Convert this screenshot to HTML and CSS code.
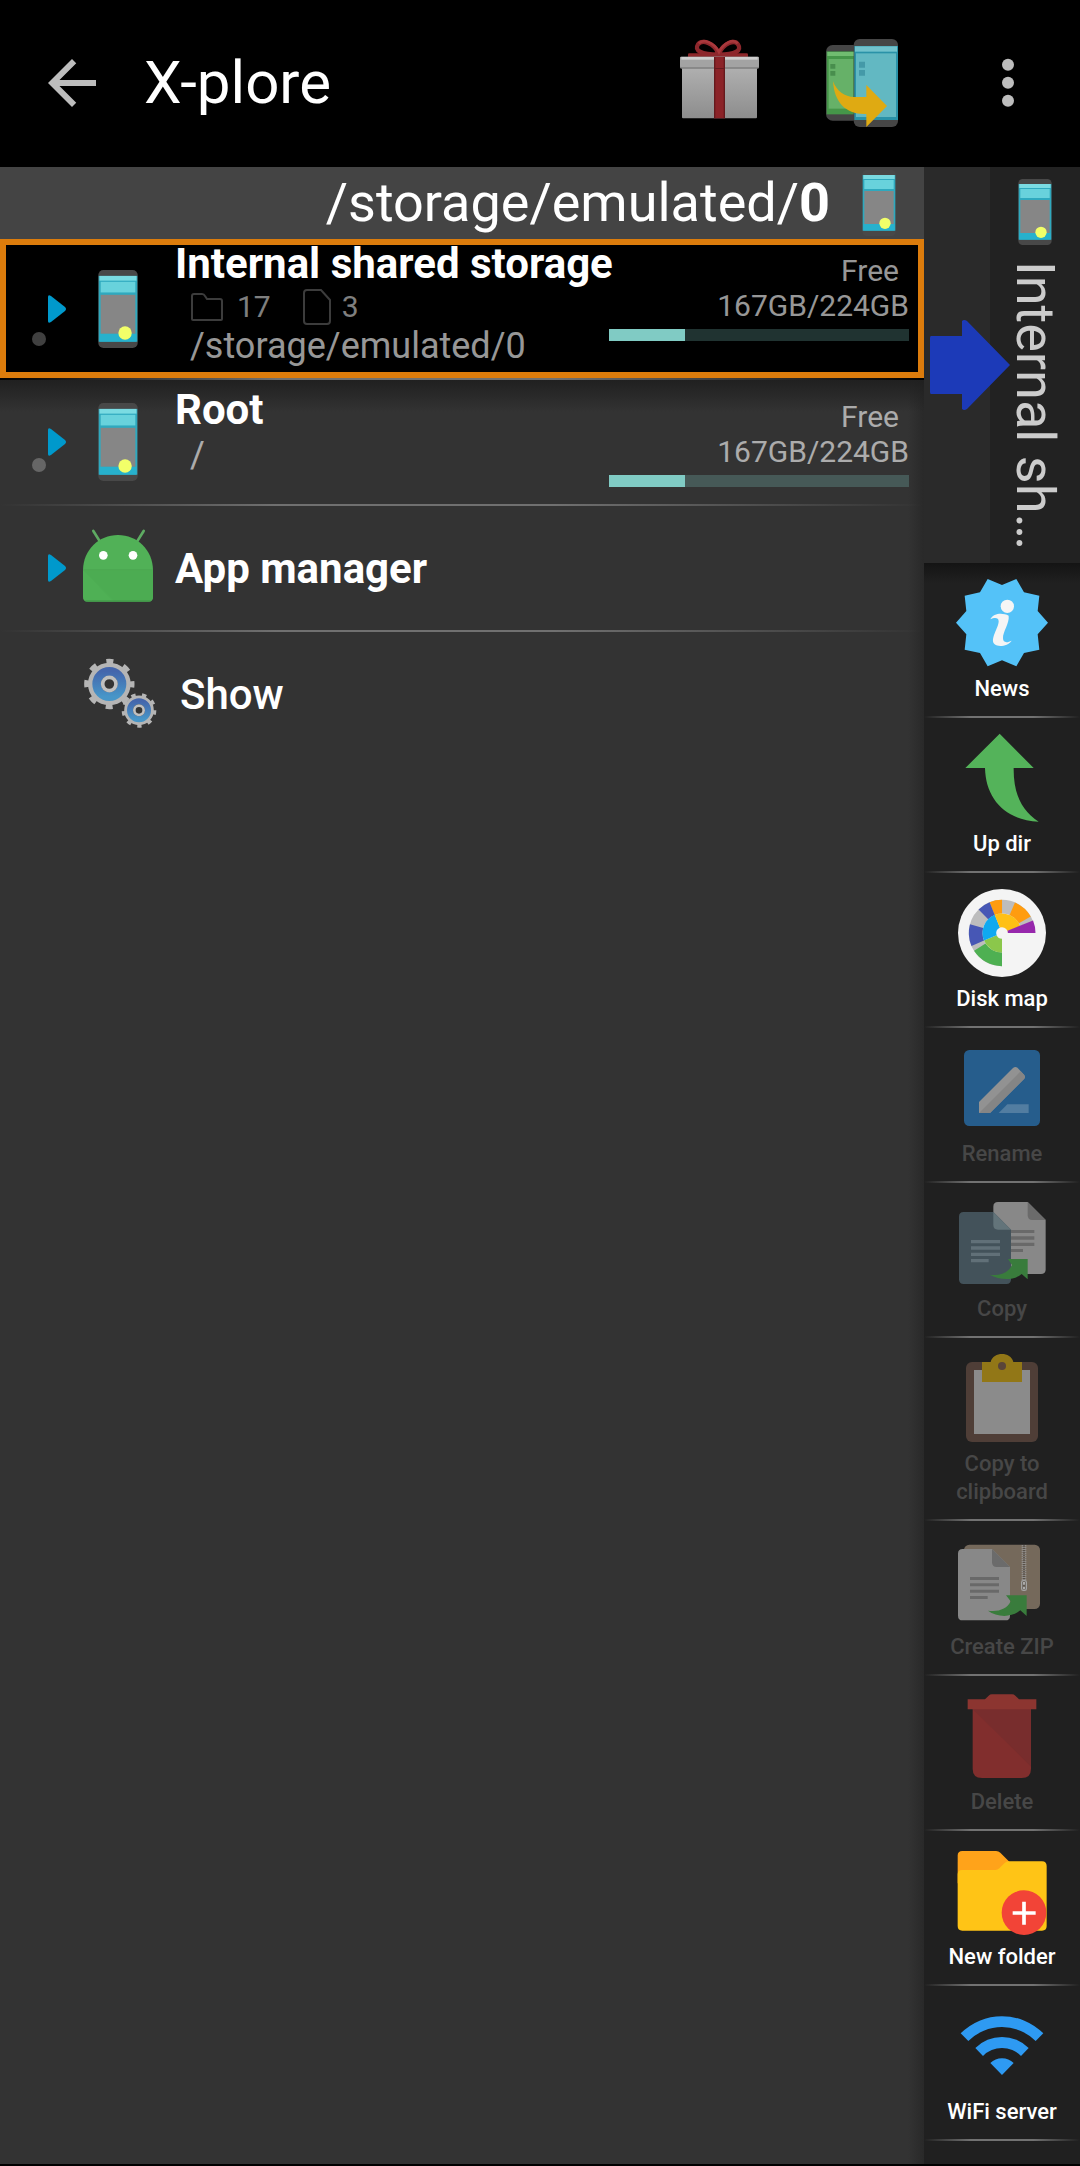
FILE: index.html
```html
<!DOCTYPE html>
<html lang="en">
<head>
<meta charset="utf-8">
<meta name="viewport" content="width=device-width, initial-scale=1">
<title>X-plore</title>
<link rel="stylesheet" href="styles.css">
</head>
<body>
<svg class="defs" aria-hidden="true">
  <defs>
    <linearGradient id="gift-body" x1="0" y1="0" x2="0" y2="1"><stop offset="0" stop-color="#b0b0b0"/><stop offset="1" stop-color="#8d8d8d"/></linearGradient>
    <linearGradient id="gear-blue" x1="0" y1="0" x2="0" y2="1"><stop offset="0" stop-color="#4466ac"/><stop offset="1" stop-color="#4796c8"/></linearGradient>
    <symbol id="phone" viewBox="0 0 100 198">
      <rect width="100" height="198" rx="13" fill="#484848"/>
      <rect x="1" y="15" width="98" height="167" fill="#2fa9be"/>
      <rect x="3" y="15" width="94" height="12" fill="#7adbe2"/>
      <rect x="6" y="30" width="88" height="27" fill="#68d2dc"/>
      <rect x="6" y="63" width="88" height="99" fill="#868686"/>
      <rect x="3" y="162" width="94" height="20" fill="#27b1cd"/>
      <circle cx="68" cy="160" r="17" fill="#f2ff69"/>
    </symbol>
    <symbol id="triangle" viewBox="0 0 18 28">
      <path d="M0 2Q0-1 3 1L17 12Q19 14 17 16L3 27Q0 29 0 26Z" fill="#0099cc"/>
    </symbol>
  </defs>
</svg>

<header class="appbar">
  <button class="icon-button" type="button" aria-label="Back">
    <svg class="icon-72" viewBox="0 0 24 24"><path fill="#bdbdbd" d="M20 11H7.83l5.59-5.59L12 4l-8 8 8 8 1.41-1.41L7.83 13H20z"/></svg>
  </button>
  <h1 class="appbar-title">X-plore</h1>
  <div class="appbar-actions">
    <button class="icon-button" type="button" aria-label="Donate">
      <svg class="icon-96" viewBox="96 105 288 288">
        <rect x="144" y="160" width="180" height="14" rx="4" fill="#8d272a"/>
        <path d="M236 162C222 128 186 118 174 133C162 151 182 164 236 164C288 164 306 151 294 133C284 118 252 128 236 162Z" fill="none" stroke="#8d272c" stroke-width="13"/>
        <path d="M176 130C190 116 222 126 237 156C252 126 280 116 293 130" fill="none" stroke="#a9383c" stroke-width="8"/>
        <rect x="126" y="200" width="225" height="155" rx="3" fill="url(#gift-body)"/>
        <rect x="120" y="170" width="237" height="36" rx="4" fill="#7f7f7f"/>
        <rect x="120" y="170" width="237" height="32" rx="4" fill="#a3a3a3"/>
        <rect x="124" y="171" width="229" height="8" fill="#cecece"/>
        <rect x="222" y="171" width="33" height="184" fill="#8b2328"/>
        <path d="M222 171h4v184h-4zM251 171h4v184h-4zM222 204h33v3h-33z" fill="#65191d"/>
      </svg>
    </button>
    <button class="icon-button" type="button" aria-label="Transfer between devices">
      <svg class="icon-96" viewBox="528 105 288 288">
        <rect x="558" y="135" width="100" height="227" rx="20" fill="#454545"/>
        <rect x="560" y="154" width="90" height="189" fill="#459649"/>
        <rect x="562" y="156" width="80" height="12" fill="#70bd70"/>
        <rect x="566" y="177" width="74" height="149" fill="#66b168"/>
        <path d="M571 192h15v14h-15zM571 213h15v14h-15z" fill="#488e4d"/>
        <rect x="641" y="117" width="133" height="264" rx="18" fill="#464646"/>
        <rect x="643" y="138" width="131" height="222" fill="#2a92a8"/>
        <rect x="645" y="139" width="126" height="16" fill="#72c2cc"/>
        <rect x="648" y="160" width="120" height="191" fill="#62b8c2"/>
        <path d="M657 185h18v18h-18zM657 210h18v17h-18z" fill="#4499a8"/>
        <path d="M579 244C590 273 614 291 642 291H679V255L741 318L679 381V342C620 345 583 309 579 244Z" fill="#dfaa12"/>
      </svg>
    </button>
    <button class="icon-button menu-button" type="button" aria-label="More options">
      <svg class="icon-72" viewBox="996 142 216 216"><g fill="#bdbdbd"><circle cx="1104" cy="195" r="18"/><circle cx="1104" cy="249" r="18"/><circle cx="1104" cy="303" r="18"/></g></svg>
    </button>
  </div>
</header>

<div class="workspace">
  <main class="pane">
    <div class="pathbar">
      <span class="pathbar-text">/storage/emulated/<b>0</b></span>
      <svg class="phone-small" aria-hidden="true"><use href="#phone"/></svg>
    </div>
    <ul class="entries">
      <li class="entry entry-selected">
        <button class="row" type="button">
          <span class="marker"></span>
          <svg class="expander" aria-hidden="true"><use href="#triangle"/></svg>
          <span class="entry-icon"><svg class="phone-large" aria-hidden="true"><use href="#phone"/></svg></span>
          <span class="entry-text">
            <span class="entry-title">Internal shared storage</span>
            <span class="counts">
              <svg class="count-folder" viewBox="0 0 34 30" aria-hidden="true"><path d="M2 27V4q0-2 2-2h8q2 0 3 2l2 3h13q2 0 2 2v18q0 1-1 1H3q-1 0-1-1z" fill="none" stroke="#3c3c3c" stroke-width="2"/></svg>
              <span>17</span>
              <svg class="count-file" viewBox="0 0 28 36" aria-hidden="true"><path d="M1 32V4q0-3 3-3h14l9 10v21q0 3-3 3H4q-3 0-3-3z" fill="none" stroke="#3c3c3c" stroke-width="2"/></svg>
              <span>3</span>
            </span>
            <span class="entry-path">/storage/emulated/0</span>
          </span>
          <span class="usage">
            <span class="usage-label">Free</span>
            <span>167GB/224GB</span>
            <progress class="usage-bar" value="57" max="224" aria-label="Used space"></progress>
          </span>
        </button>
      </li>
      <li class="entry">
        <button class="row row-detailed" type="button">
          <span class="marker"></span>
          <svg class="expander" aria-hidden="true"><use href="#triangle"/></svg>
          <span class="entry-icon"><svg class="phone-large" aria-hidden="true"><use href="#phone"/></svg></span>
          <span class="entry-text">
            <span class="entry-title">Root</span>
            <span class="entry-path">/</span>
          </span>
          <span class="usage">
            <span class="usage-label">Free</span>
            <span>167GB/224GB</span>
            <progress class="usage-bar" value="57" max="224" aria-label="Used space"></progress>
          </span>
        </button>
      </li>
      <li class="entry">
        <button class="row row-simple" type="button">
          <svg class="expander" aria-hidden="true"><use href="#triangle"/></svg>
          <span class="entry-icon">
            <svg class="icon-84" viewBox="228 108 252 252" aria-hidden="true">
              <path d="M280 123L300 155M431 123L411 155" stroke="#5eab62" stroke-width="8" stroke-linecap="round"/>
              <path d="M249 240C250 180 296 135 354 135S458 180 459 240V320Q459 335 444 335H264Q249 335 249 320Z" fill="#51b157"/>
              <path d="M249 240H459" stroke="#439a49" stroke-width="2"/>
              <path d="M250 241L342 334H264Q250 334 250 320Z" fill="#4fb055"/>
              <path d="M250 241H459V320Q459 334 444 334H342Z" fill="#4cac52"/>
              <path d="M256 333H452" stroke="#3f9146" stroke-width="3"/>
              <circle cx="310" cy="196" r="13" fill="#fff"/><circle cx="399" cy="196" r="13" fill="#fff"/>
            </svg>
          </span>
          <span class="entry-title">App manager</span>
        </button>
      </li>
      <li class="entry entry-last">
        <button class="row row-simple row-leaf" type="button">
          <span class="entry-icon">
            <svg class="icon-84" viewBox="228 486 252 252" aria-hidden="true">
              <g fill="none" stroke="#b5b5b5">
                <circle cx="328" cy="582" r="56" stroke-width="16"/>
                <circle cx="328" cy="582" r="68" stroke-width="15" pathLength="80" stroke-dasharray="4 6" stroke-dashoffset="2"/>
                <circle cx="417" cy="661" r="39" stroke-width="11"/>
                <circle cx="417" cy="661" r="46" stroke-width="12" pathLength="90" stroke-dasharray="4 6" stroke-dashoffset="0"/>
              </g>
              <circle cx="328" cy="582" r="38" fill="none" stroke="url(#gear-blue)" stroke-width="26"/>
              <circle cx="328" cy="582" r="20" fill="#333" stroke="#c0c0c0" stroke-width="11"/>
              <circle cx="417" cy="661" r="27" fill="none" stroke="url(#gear-blue)" stroke-width="18"/>
              <circle cx="417" cy="661" r="14" fill="#333" stroke="#c0c0c0" stroke-width="8"/>
            </svg>
          </span>
          <span class="entry-title entry-title-medium">Show</span>
        </button>
      </li>
    </ul>
  </main>

  <aside class="side">
    <div class="tabs">
      <button class="tab" type="button">
        <svg class="phone-small" aria-hidden="true"><use href="#phone"/></svg>
        <span class="tab-text">Internal sh…</span>
      </button>
      <svg class="pane-arrow" viewBox="0 0 80 90" aria-hidden="true"><path d="M1 16H32V1Q34-1 37 1L80 45L37 89Q34 91 32 89V74H1Q0 74 0 72V18Q0 16 1 16Z" fill="#1c3ab8"/></svg>
    </div>
    <nav class="tools">
      <button class="tool" type="button">
        <svg class="icon-96" viewBox="102 45 288 288" aria-hidden="true">
          <path d="M384 188L353 153 358 107 312 97 289 57 246 75 203 57 180 97 134 107 139 153 108 188 139 223 134 269 180 279 203 319 246 301 289 319 312 279 358 269 353 223Z" fill="#54c2f8"/>
          <circle cx="262" cy="139" r="20" fill="#f5f5f5"/>
          <path d="M211 178C221 158 249 158 266 167C269 190 248 215 249 235C249 250 263 248 275 242C264 258 236 262 224 253C208 239 236 204 236 184C236 171 222 173 211 178Z" fill="#f5f5f5"/>
        </svg>
        News
      </button>
      <button class="tool" type="button">
        <svg class="icon-96" viewBox="102 510 288 288" aria-hidden="true"><path d="M239 521L341 624H281C280 701 305 752 356 785C256 781 197 716 195 624H136Z" fill="#54b35a"/></svg>
        Up dir
      </button>
      <button class="tool" type="button">
        <svg class="icon-96" viewBox="102 975 288 288" aria-hidden="true">
          <circle cx="246" cy="1119" r="132" fill="#f4f4f4"/>
          <g fill="none" stroke-width="41">
            <circle cx="246" cy="1119" r="79" stroke="#bdbdbd" pathLength="360" stroke-dasharray="248 360" transform="rotate(90 246 1119)"/>
            <circle cx="246" cy="1119" r="79" stroke="#ff9c0f" pathLength="360" stroke-dasharray="37 360" transform="rotate(-67 246 1119)"/>
            <circle cx="246" cy="1119" r="79" stroke="#ff9c0f" pathLength="360" stroke-dasharray="22 360" transform="rotate(-112 246 1119)"/>
            <circle cx="246" cy="1119" r="79" stroke="#4757b5" pathLength="360" stroke-dasharray="23 360" transform="rotate(-135 246 1119)"/>
            <circle cx="246" cy="1119" r="79" stroke="#4757b5" pathLength="360" stroke-dasharray="38 360" transform="rotate(-203 246 1119)"/>
            <circle cx="246" cy="1119" r="79" stroke="#4eb052" pathLength="360" stroke-dasharray="57 360" transform="rotate(-270 246 1119)"/>
            <circle cx="246" cy="1119" r="38" stroke="#8bc74b" pathLength="360" stroke-dasharray="67 360" transform="rotate(-270 246 1119)"/>
            <circle cx="246" cy="1119" r="38" stroke="#10a9f0" pathLength="360" stroke-dasharray="91 360" transform="rotate(-203 246 1119)"/>
            <circle cx="246" cy="1119" r="38" stroke="#ffc014" pathLength="360" stroke-dasharray="92 360" transform="rotate(-112 246 1119)"/>
          </g>
          <circle cx="246" cy="1119" r="59" fill="none" stroke="#9728ac" stroke-width="83" pathLength="360" stroke-dasharray="22 360" transform="rotate(-22 246 1119)"/>
        </svg>
        Disk map
      </button>
      <button class="tool" type="button" disabled>
        <svg class="icon-96" viewBox="102 60 288 288" aria-hidden="true">
          <rect x="132" y="90" width="228" height="228" rx="16" fill="#265d8c"/>
          <path d="M177 246L279 144Q286 138 293 144L312 164Q318 171 312 177L210 279H177Z" fill="#929292"/>
          <path d="M177 279L302 154 312 164Q318 171 312 177L210 279Z" fill="#858585"/>
          <path d="M236 279L262 253H326V279Z" fill="#527da1"/>
        </svg>
        Rename
      </button>
      <button class="tool" type="button" disabled>
        <svg class="icon-96" viewBox="102 525 288 288" aria-hidden="true">
          <path d="M220 560Q220 546 234 546H323L377 600V748Q377 762 363 762H260L220 680Z" fill="#888"/>
          <path d="M323 546L377 600H337Q323 600 323 586Z" fill="#6b6b6b"/>
          <path d="M271 630h72v9h-72zM271 649h72v10h-72zM271 668h72v10h-72zM271 687h38v9h-38z" fill="#696969"/>
          <path d="M117 590Q117 576 131 576H220L273 629V778Q273 792 259 792H131Q117 792 117 778Z" fill="#43525a"/>
          <path d="M220 576L273 629H234Q220 629 220 615Z" fill="#63747a"/>
          <path d="M153 660h87v10h-87zM153 679h87v10h-87zM153 698h87v10h-87zM153 717h53v10h-53z" fill="#617078"/>
          <path d="M209 764C239 769 266 758 276 735L264 717H323V778L305 762C279 784 238 780 209 764Z" fill="#397c3c"/>
        </svg>
        Copy
      </button>
      <button class="tool" type="button" disabled>
        <svg class="icon-96" viewBox="102 990 288 288" aria-hidden="true">
          <rect x="138" y="1026" width="216" height="240" rx="18" fill="#4f3e37"/>
          <rect x="162" y="1050" width="168" height="192" fill="#8b8b8b"/>
          <path d="M186 1026H212C220 994 272 994 280 1026H306V1086H186Z" fill="#927717"/>
          <circle cx="246" cy="1038" r="12" fill="#594539"/>
        </svg>
        Copy to clipboard
      </button>
      <button class="tool" type="button" disabled>
        <svg class="icon-96" viewBox="102 69 288 288" aria-hidden="true">
          <rect x="132" y="104" width="228" height="193" rx="16" fill="#75695b"/>
          <path d="M312 106V212" stroke="#9a9a9a" stroke-width="14" stroke-dasharray="3 3"/>
          <path d="M312 106V212" stroke="#453f39" stroke-width="4" stroke-dasharray="4 3"/>
          <rect x="305" y="212" width="14" height="29" rx="5" fill="#5e574e" stroke="#a2a2a2" stroke-width="4"/>
          <path d="M312 216v8M312 230v8" stroke="#bbb" stroke-width="5"/>
          <path d="M114 131Q114 117 128 117H216L270 171V317Q270 331 256 331H128Q114 331 114 317Z" fill="#888"/>
          <path d="M216 117L270 171H230Q216 171 216 157Z" fill="#6b6b6b"/>
          <path d="M150 201h87v9h-87zM150 220h87v9h-87zM150 239h87v9h-87zM150 258h53v9h-53z" fill="#696969"/>
          <path d="M204 302C234 307 262 297 272 274L258 256H320V318L301 301C275 324 230 322 204 302Z" fill="#397c3c"/>
        </svg>
        Create ZIP
      </button>
      <button class="tool" type="button" disabled>
        <svg class="icon-96" viewBox="102 534 288 288" aria-hidden="true">
          <path d="M158 597H333V776Q333 804 305 804H186Q158 804 158 776Z" fill="#812e2d"/>
          <path d="M158 597H333V770Z" fill="#782d2d"/>
          <path d="M143 568H195L206 557Q210 553 216 553H276Q282 553 286 557L297 568H349V598H143Z" fill="#8c3530"/>
        </svg>
        Delete
      </button>
      <button class="tool" type="button">
        <svg class="icon-96" viewBox="102 69 288 288" aria-hidden="true">
          <path d="M113 107Q113 93 127 93H228Q236 93 241 98L268 125V190H113Z" fill="#ffa31a"/>
          <path d="M113 163Q113 150 126 150H226Q233 150 238 145L254 129Q259 124 266 124H366Q380 124 380 138V318Q380 332 366 332H127Q113 332 113 318Z" fill="#ffc416"/>
          <circle cx="312" cy="278" r="67" fill="#f24437"/>
          <path d="M278 279H347M312 245V314" stroke="#fff" stroke-width="11"/>
        </svg>
        New folder
      </button>
      <button class="tool" type="button">
        <svg class="icon-96" viewBox="102 534 288 288" aria-hidden="true"><path d="M122 640A175 175 0 0 1 370 640L347 663A143 143 0 0 0 145 663ZM166 684A113 113 0 0 1 326 684L303 708A80 80 0 0 0 189 708ZM211 729A50 50 0 0 1 281 729L246 765Z" fill="#2e9af2"/></svg>
        WiFi server
      </button>
    </nav>
  </aside>
</div>
</body>
</html>
```
FILE: styles.css
```css
* {
  box-sizing: border-box;
}

body {
  margin: 0;
  min-height: 100vh;
  display: flex;
  flex-direction: column;
  background: #000;
  color: #fff;
  font-family: Roboto, sans-serif;
}

button {
  margin: 0;
  padding: 0;
  border: 0;
  background: none;
  color: inherit;
  font: inherit;
  cursor: pointer;
}

button:disabled {
  cursor: default;
}

svg {
  display: block;
  flex: none;
}

.defs {
  position: absolute;
  width: 0;
  height: 0;
}

.icon-72 {
  width: 72px;
  height: 72px;
}

.icon-84 {
  width: 84px;
  height: 84px;
}

.icon-96 {
  width: 96px;
  height: 96px;
}

.phone-small {
  width: 34px;
  height: 66px;
}

.phone-large {
  width: 40px;
  height: 78px;
}

/* Top bar */

.appbar {
  display: flex;
  align-items: center;
  gap: 36px;
  padding: 35px 36px 36px;
}

.appbar-title {
  flex: 1;
  margin: 0;
  font-size: 60px;
  line-height: 72px;
  font-weight: 400;
}

.appbar-actions {
  display: flex;
  align-items: center;
  gap: 48px;
}

.menu-button {
  margin-left: 12px;
}

/* Main area */

.workspace {
  flex: 1;
  display: flex;
  padding-bottom: 2px;
}

.pane {
  flex: 1;
  min-width: 0;
  background: linear-gradient(to left, #292929, #333 16px);
}

.pathbar {
  display: flex;
  justify-content: flex-end;
  gap: 32px;
  height: 72px;
  padding: 3px 28px 3px 0;
  background: #444;
}

.pathbar-text {
  font-size: 54px;
  line-height: 66px;
}

.entries {
  margin: 0;
  padding: 0;
  list-style: none;
}

.entry {
  padding-bottom: 2px;
  background: linear-gradient(to right, transparent, #707070 30%, #707070 60%, transparent) bottom / 100% 2px no-repeat;
}

.entry-selected {
  background-color: #000;
}

.entry-selected + .entry {
  background-image:
    linear-gradient(to right, transparent, #707070 30%, #707070 60%, transparent),
    linear-gradient(#202020, transparent);
  background-position: bottom, top;
  background-size: 100% 2px, 100% 32px;
}

.entry-last {
  background: none;
}

.row {
  display: flex;
  align-items: center;
  width: 100%;
  min-height: 124px;
  padding: 0 15px 0 32px;
  text-align: left;
}

.entry-selected .row {
  min-height: 139px;
  box-shadow: inset 0 0 0 6px #dc7c0c;
}

.row-simple {
  padding-left: 48px;
}

.row-leaf {
  padding-left: 66px;
}

.marker {
  align-self: flex-end;
  width: 14px;
  height: 14px;
  margin: 0 2px 32px 0;
  border-radius: 50%;
  background: rgba(255, 255, 255, 0.25);
}

.expander {
  width: 18px;
  height: 28px;
}

.entry-icon {
  display: flex;
  justify-content: center;
  width: 84px;
  margin: 0 15px 0 10px;
}

.entry-text {
  flex: 1;
  min-width: 0;
  align-self: flex-start;
  display: flex;
  flex-direction: column;
}

.row-detailed .entry-text,
.row-detailed .usage {
  padding-top: 5px;
}

.entry-title {
  font-size: 42px;
  line-height: 49px;
  font-weight: 700;
  white-space: nowrap;
}

.entry-title-medium {
  padding-left: 5px;
  font-weight: 500;
}

.counts {
  display: flex;
  align-items: center;
  height: 37px;
  padding-left: 15px;
  color: rgba(255, 255, 255, 0.5);
  font-size: 30px;
  line-height: 36px;
}

.count-folder {
  width: 34px;
  height: 30px;
  margin-right: 13px;
}

.count-file {
  width: 28px;
  height: 36px;
  margin: 0 11px 0 32px;
}

.entry-path {
  padding-left: 15px;
  color: rgba(255, 255, 255, 0.6);
  font-size: 36px;
  line-height: 42px;
}

.usage {
  flex: none;
  align-self: flex-start;
  display: flex;
  flex-direction: column;
  align-items: flex-end;
  width: 300px;
  margin-top: 14px;
  color: rgba(255, 255, 255, 0.6);
  font-size: 30px;
  line-height: 35px;
}

.usage-label {
  padding-right: 10px;
}

.usage-bar {
  appearance: none;
  display: block;
  width: 100%;
  height: 12px;
  margin-top: 6px;
  border: 0;
  background: rgba(128, 203, 196, 0.25);
}

.usage-bar::-webkit-progress-bar {
  background: transparent;
}

.usage-bar::-webkit-progress-value {
  background: #80cbc4;
}

/* Right column */

.side {
  flex: none;
  display: flex;
  flex-direction: column;
  width: 156px;
  background: #202020;
}

.tabs {
  position: relative;
  display: flex;
  justify-content: flex-end;
  background: #2a2a2a;
}

.tab {
  display: flex;
  flex-direction: column;
  align-items: center;
  width: 90px;
  min-height: 396px;
  padding-top: 12px;
  background: #222;
}

.tab-text {
  margin-top: 16px;
  color: #ccc;
  font-size: 54px;
  line-height: 66px;
  white-space: nowrap;
  writing-mode: vertical-rl;
}

.pane-arrow {
  position: absolute;
  left: 6px;
  top: 153px;
  width: 80px;
  height: 90px;
}

.tools {
  flex: 1;
  display: flex;
  flex-direction: column;
  background: linear-gradient(#141414, transparent) top / 100% 20px no-repeat;
}

.tool {
  display: flex;
  flex-direction: column;
  align-items: center;
  gap: 4px;
  padding: 12px 16px 15px;
  background: linear-gradient(to right, transparent, #727272 30%, #727272 70%, transparent) bottom / 100% 2px no-repeat;
  font-size: 22px;
  line-height: 28px;
  font-weight: 500;
  text-align: center;
}

.tool:disabled {
  color: #474747;
}
```
